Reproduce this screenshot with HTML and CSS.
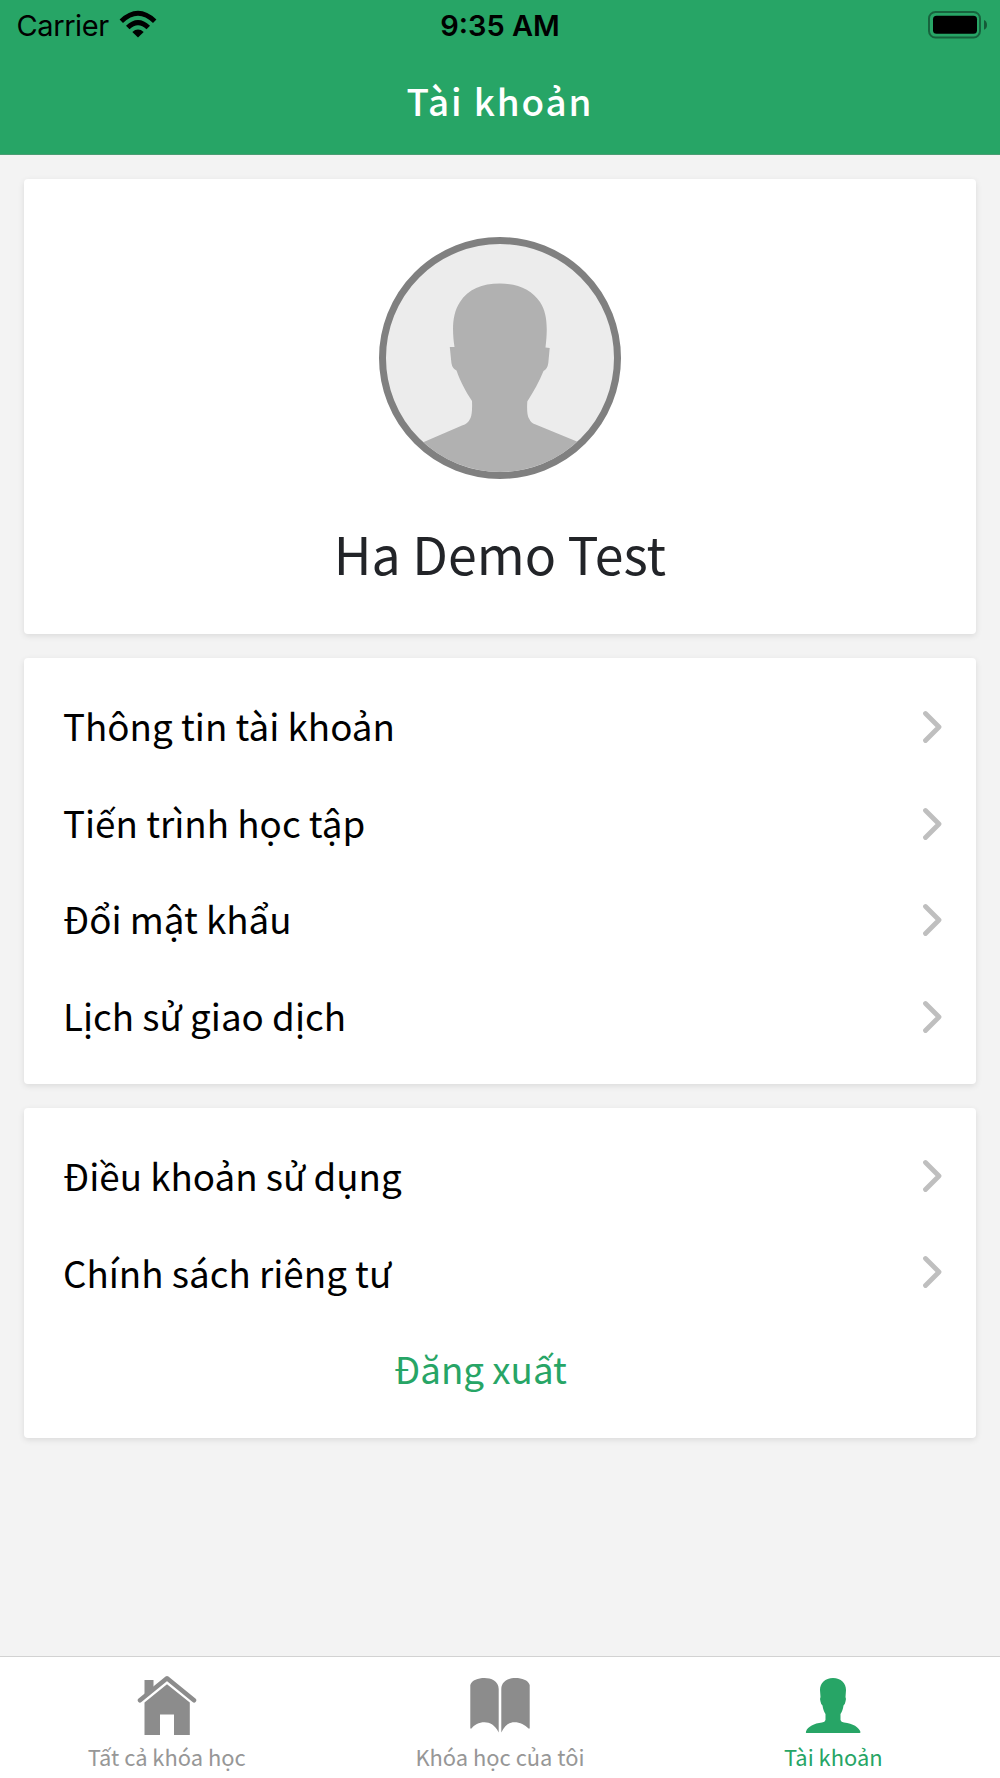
FILE: index.html
```html
<!DOCTYPE html>
<html lang="vi">
<head>
    <meta charset="UTF-8">
    <meta name="viewport" content="width=device-width, initial-scale=1.0">
    <title>Tài khoản</title>
    <link rel="stylesheet" href="styles.css">
</head>
<body>
    <header class="header">
        <div class="status-bar">
            <div class="status-left">
                <span class="carrier">Carrier</span>
                <svg class="wifi" width="38" height="28" viewBox="0 0 38 28">
                    <path d="M0.6 9.4 Q19 -8 37.4 9.4 L34 12.9 Q19 -1.6 4 12.9 Z"/>
                    <path d="M7 15.8 Q19 4.4 31 15.8 L27.5 19.2 Q19 11.4 10.5 19.2 Z"/>
                    <path d="M13.3 22 Q19 17.2 24.7 22 L19 27.6 Z"/>
                </svg>
            </div>
            <div class="time">9:35 AM</div>
            <svg class="battery" width="60" height="28" viewBox="0 0 60 28">
                <rect x="1" y="1" width="51" height="25.5" rx="6.5" fill="none" stroke="#000" stroke-opacity="0.4" stroke-width="2"/>
                <rect x="5" y="4.8" width="44" height="18" rx="3.5"/>
                <path d="M56 9 Q59 10.3 59 13.9 Q59 17.5 56 18.8 Z" fill-opacity="0.45"/>
            </svg>
        </div>
        <h1 class="title">Tài khoản</h1>
    </header>

    <main class="content">
        <section class="card profile">
            <div class="avatar">
                <svg width="228" height="228" viewBox="0 0 228 228">
                    <path fill="#b1b1b1" d="M68.5 103 C66 86 66 70 74 58 C82 45 96 39.500 114 39.500 C132 39.500 146 46 154 58 C162 70 161.500 86 159.500 103.500 L163.700 104 L162.300 119 Q161.500 125 157.500 127 C153 138 148 147 141.300 157.500 Q140.500 171 143 174.500 Q145 179 149 180.300 L197 200 L190 228 L38 228 L32 200.500 L76 181.500 Q82 180 84.500 174 Q86.500 170 86 157 C79.500 147 74.500 138 70.500 126.500 Q66.300 124.500 65.400 119 L63.800 103 Z"/>
                </svg>
            </div>
            <h2 class="name">Ha Demo Test</h2>
        </section>

        <section class="card">
            <ul class="menu">
                <li class="menu-item">
                    <span>Thông tin tài khoản</span>
                    <svg class="arrow" width="20" height="34" viewBox="0 0 20 34"><path d="M3.500 3.500 L17 17 L3.500 30.500"/></svg>
                </li>
                <li class="menu-item">
                    <span>Tiến trình học tập</span>
                    <svg class="arrow" width="20" height="34" viewBox="0 0 20 34"><path d="M3.500 3.500 L17 17 L3.500 30.500"/></svg>
                </li>
                <li class="menu-item">
                    <span>Đổi mật khẩu</span>
                    <svg class="arrow" width="20" height="34" viewBox="0 0 20 34"><path d="M3.500 3.500 L17 17 L3.500 30.500"/></svg>
                </li>
                <li class="menu-item">
                    <span>Lịch sử giao dịch</span>
                    <svg class="arrow" width="20" height="34" viewBox="0 0 20 34"><path d="M3.500 3.500 L17 17 L3.500 30.500"/></svg>
                </li>
            </ul>
        </section>

        <section class="card links">
            <ul class="menu">
                <li class="menu-item">
                    <span>Điều khoản sử dụng</span>
                    <svg class="arrow" width="20" height="34" viewBox="0 0 20 34"><path d="M3.500 3.500 L17 17 L3.500 30.500"/></svg>
                </li>
                <li class="menu-item">
                    <span>Chính sách riêng tư</span>
                    <svg class="arrow" width="20" height="34" viewBox="0 0 20 34"><path d="M3.500 3.500 L17 17 L3.500 30.500"/></svg>
                </li>
                <li class="menu-item logout">
                    <span>Đăng xuất</span>
                </li>
            </ul>
        </section>
    </main>

    <nav class="tab-bar">
        <a class="tab">
            <svg width="60" height="60" viewBox="0 0 60 60">
                <path d="M7.500 5 H16.500 V14 L7.500 21 Z"/>
                <path d="M3 25.300 L30 3.300 L57 25.300" fill="none" stroke="currentColor" stroke-width="4.5" stroke-linecap="round" stroke-linejoin="round"/>
                <path d="M30 9.300 L52.800 27.500 V60 H37 V39.500 H23 V60 H7.500 V27.500 Z"/>
            </svg>
            <span>Tất cả khóa học</span>
        </a>
        <a class="tab">
            <svg width="60" height="60" viewBox="0 0 60 60">
                <path d="M0.300 10 C2 5 8 3 14.500 3 C21 3 28.700 6 28.700 14 V57.500 C25 50 20 47.300 14.500 47.300 C9 47.300 4 50 1.500 53.500 L0.300 53.500 Z"/>
                <path d="M59.700 10 C58 5 52 3 45.500 3 C39 3 31.300 6 31.300 14 V57.500 C35 50 39 47.300 44.500 47.300 C50 47.300 55 50 58.500 53.500 L59.700 53.500 Z"/>
            </svg>
            <span>Khóa học của tôi</span>
        </a>
        <a class="tab active">
            <svg width="60" height="60" viewBox="0 0 60 60">
                <path d="M30 3 C38 3 43 8 43 15 L42.500 22 Q43.500 24 42.500 26.500 Q42 29.500 40.500 30.500 C40 34 39 37 37.500 39 V45 Q38 47.300 41 47.600 C50 48.500 56 52.500 57.500 57 Q57.500 58 56.500 58 H3.500 Q2.500 58 3 56.500 C5 51.500 11 48.500 19 47.600 Q22 47.300 22.500 45 V39 C21 37 20 34 19.500 30.500 Q18 29.500 17.500 26.500 Q16.500 24 17.500 22 L17 15 C17 8 22 3 30 3 Z"/>
            </svg>
            <span>Tài khoản</span>
        </a>
    </nav>
</body>
</html>
```
FILE: styles.css
```css
* {
    box-sizing: border-box;
}
body {
    margin: 0;
    height: 1778px;
    display: flex;
    flex-direction: column;
    background-color: #f3f3f3;
    font-family: "Noto Sans CJK SC", "Noto Sans", sans-serif;
    color: #000;
}
h1, h2 {
    margin: 0;
    font-weight: 400;
}
svg {
    display: block;
    flex-shrink: 0;
    fill: currentColor;
}
.header {
    height: 155px;
    background-color: #27a566;
    border-bottom: 1px solid #4b9d74;
}
.status-bar {
    height: 50px;
    padding: 0 12px;
    display: grid;
    grid-template-columns: 1fr auto 1fr;
    align-items: center;
    font-family: Inter, sans-serif;
    font-size: 29px;
}
.status-left {
    padding-left: 4.5px;
    display: flex;
    align-items: center;
    gap: 10px;
}
.carrier {
    font-weight: 400;
    letter-spacing: -0.4px;
}
.wifi {
    margin-bottom: 3px;
}
.time {
    font-weight: 600;
}
.battery {
    justify-self: end;
}
.title {
    height: 101px;
    line-height: 101px;
    text-align: center;
    color: #fff;
    font-size: 36.8px;
    font-weight: 500;
    letter-spacing: 1.9px;
}
.content {
    flex: 1;
    padding: 24px 24px 0;
    display: flex;
    flex-direction: column;
    gap: 24px;
}
.card {
    padding: 21px 34px 19px 39px;
    background-color: #fff;
    border-radius: 4px;
    box-shadow: 0 2px 6px rgba(0, 0, 0, 0.1);
}
.profile {
    height: 455px;
    padding: 58px 0 0;
    display: flex;
    flex-direction: column;
    align-items: center;
}
.avatar {
    width: 242px;
    height: 242px;
    border: 7px solid #808080;
    border-radius: 50%;
    background-color: #ececec;
    overflow: hidden;
}
.name {
    margin-top: 35px;
    line-height: 78px;
    font-size: 51.8px;
    color: #222428;
}
.menu {
    margin: 0;
    padding: 0;
    list-style: none;
}
.menu-item {
    height: 96.6px;
    display: flex;
    align-items: center;
    justify-content: space-between;
    font-size: 36.75px;
}
.menu-item span {
    padding-bottom: 4px;
}
.arrow {
    fill: none;
    stroke: #bfbfbf;
    stroke-width: 4.8;
    stroke-linecap: round;
    stroke-linejoin: round;
}
.links .menu-item span {
    padding-bottom: 5px;
}
.links .arrow {
    margin-bottom: 4px;
}
.logout {
    justify-content: center;
    padding-right: 44px;
    color: #27a566;
}
.tab-bar {
    height: 122px;
    display: flex;
    background-color: #fff;
    border-top: 1px solid #d2d2d2;
}
.tab {
    flex: 1;
    padding-top: 18px;
    display: flex;
    flex-direction: column;
    align-items: center;
    color: #8c8c8c;
    font-size: 21.9px;
    line-height: 43px;
}
.tab span {
    opacity: 0.9;
}
.tab.active {
    color: #27a566;
}
.tab.active span {
    opacity: 1;
}
```
